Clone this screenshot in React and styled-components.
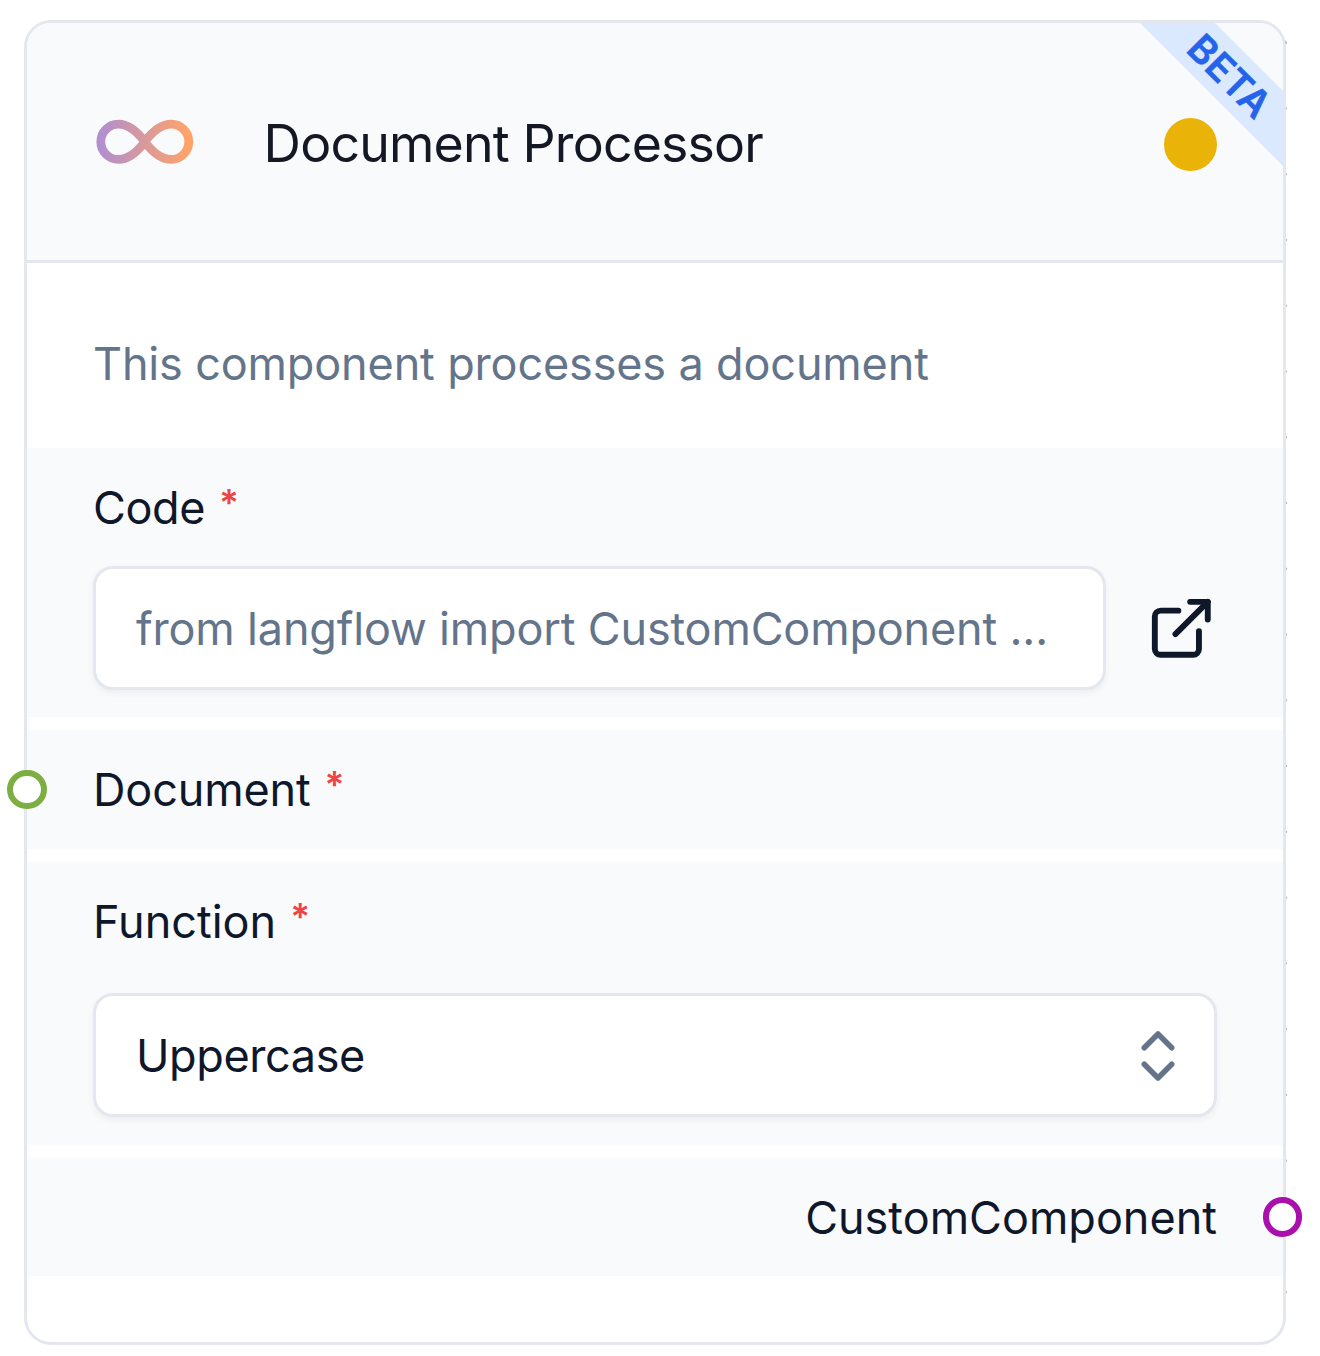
import React from "react";
import styled, { createGlobalStyle } from "styled-components";

const GlobalStyle = createGlobalStyle`
  *, *::before, *::after { box-sizing: border-box; }
  body { margin: 0; background: #ffffff; }
`;

const Canvas = styled.main`
  display: flex;
  align-items: flex-start;
  height: 1356px;
  padding: 20px 0 0 24px;
  overflow: hidden;
  font-family: Inter, "Liberation Sans", sans-serif;
  background-color: #ffffff;
  background-image: radial-gradient(circle at center, #81818a 1.1px, transparent 2.1px);
  background-size: 65.77px 65.77px;
  background-position: 1252.2px 9.8px;
`;

const Node = styled.article`
  position: relative;
  display: flex;
  flex-direction: column;
  width: 1262px;
  height: 1325px;
  border: 3px solid #e4e7ee;
  border-radius: 27px;
  background: #ffffff;
`;

const Header = styled.header`
  position: relative;
  display: flex;
  align-items: center;
  height: 240px;
  padding: 0 66px 0 65px;
  border-bottom: 3px solid #e4e7ee;
  border-radius: 24px 24px 0 0;
  background: #f9fafc;
  overflow: hidden;
`;

const NodeIcon = styled.svg`
  flex: none;
  width: 105.6px;
  height: 105.6px;
  margin-top: 1px;
`;

const Title = styled.h1`
  flex: 1;
  margin: 2px 0 0 66px;
  font-size: 51.8px;
  font-weight: 400;
  line-height: 66px;
  letter-spacing: -0.82px;
  color: #141824;
  white-space: nowrap;
`;

const StatusDot = styled.span`
  width: 53px;
  height: 53px;
  margin-top: 6px;
  border-radius: 50%;
  background: #eab308;
`;

const Ribbon = styled.span`
  position: absolute;
  top: 26px;
  right: -96.5px;
  display: flex;
  align-items: center;
  justify-content: center;
  width: 300px;
  height: 53px;
  padding-top: 2px;
  background: #dbe9fe;
  color: #2563eb;
  font-size: 38.4px;
  font-weight: 600;
  line-height: 51px;
  letter-spacing: 0.2px;
  -webkit-text-stroke: 0.5px #2563eb;
  transform: rotate(45deg);
`;

const Description = styled.p`
  height: 185px;
  margin: 0;
  padding: 68px 66px 0;
  font-size: 45px;
  line-height: 66px;
  letter-spacing: -0.15px;
  color: #64748b;
  white-space: nowrap;
`;

const Fields = styled.div`
  display: flex;
  flex-direction: column;
  gap: 13px;
`;

const Field = styled.section`
  position: relative;
  height: ${(p) => p.$height}px;
  padding: 27px 66px 0;
  background: #f9fafc;
  text-align: ${(p) => (p.$output ? "right" : "left")};
`;

const Label = styled.div`
  height: 66px;
  font-size: 45px;
  line-height: 66px;
  letter-spacing: ${(p) => p.$tracking || 0}px;
  color: #0f172a;
  white-space: nowrap;
`;

const Required = styled.span`
  margin-left: 14px;
  font-size: 37px;
  font-weight: 600;
  line-height: 1;
  vertical-align: 8px;
  color: #ef4444;
`;

const ControlRow = styled.div`
  display: flex;
  align-items: center;
  gap: 40px;
  margin-top: ${(p) => p.$gap}px;
`;

const Control = styled.div`
  display: flex;
  flex: 1;
  align-items: center;
  justify-content: space-between;
  height: 124px;
  padding: 2px 23px 0 40px;
  border: 3px solid #e4e7ee;
  border-radius: 20px;
  background: #ffffff;
  box-shadow: 0 3px 7px rgba(0, 0, 0, 0.05);
  color: ${(p) => (p.$muted ? "#64748b" : "#0f172a")};
  font-size: 45px;
  line-height: 66px;
  letter-spacing: ${(p) => p.$tracking || 0}px;
  white-space: nowrap;
`;

const LineIcon = styled.svg`
  flex: none;
  width: ${(p) => p.$size}px;
  height: ${(p) => p.$size}px;
  fill: none;
  stroke: ${(p) => p.$color};
  stroke-width: 2;
  stroke-linecap: round;
  stroke-linejoin: round;
`;

const Handle = styled.i`
  position: absolute;
  top: ${(p) => p.$top}px;
  ${(p) => p.$side}: ${(p) => p.$offset}px;
  width: 39.6px;
  height: 39.6px;
  border: 6.6px solid ${(p) => p.$color};
  border-radius: 50%;
  background: #ffffff;
`;

function InfinityMark() {
  return (
    <NodeIcon viewBox="0 0 24 24" fill="none" aria-hidden="true">
      <defs>
        <linearGradient id="mark" x1="1" y1="0" x2="23" y2="0" gradientUnits="userSpaceOnUse">
          <stop offset="0.05" stopColor="#b28fce" />
          <stop offset="0.95" stopColor="#ffa369" />
        </linearGradient>
      </defs>
      <path
        d="M12 12c-2-2.67-4-4-6-4a4 4 0 1 0 0 8c2 0 4-1.33 6-4Zm0 0c2 2.67 4 4 6 4a4 4 0 0 0 0-8c-2 0-4 1.33-6 4Z"
        stroke="url(#mark)"
        strokeWidth="2"
        strokeLinecap="round"
        strokeLinejoin="round"
      />
    </NodeIcon>
  );
}

export default function App() {
  return (
    <>
      <GlobalStyle />
      <Canvas>
        <Node>
          <Header>
            <InfinityMark />
            <Title>Document Processor</Title>
            <StatusDot />
            <Ribbon>BETA</Ribbon>
          </Header>
          <Description>This component processes a document</Description>
          <Fields>
            <Field $height={269}>
              <Label $tracking={-0.4}>Code<Required>*</Required></Label>
              <ControlRow $gap={25}>
                <Control $muted $tracking={-0.17}>from langflow import CustomComponent ...</Control>
                <LineIcon viewBox="0 0 24 24" $size={70.6} $color="#0f172a">
                  <path d="M18 13v6a2 2 0 0 1-2 2H5a2 2 0 0 1-2-2V8a2 2 0 0 1 2-2h6" />
                  <path d="M15 3h6v6" />
                  <path d="M10 14 21 3" />
                </LineIcon>
              </ControlRow>
            </Field>
            <Field $height={119}>
              <Handle $side="left" $offset={-20} $top={39.7} $color="#7cae42" />
              <Label $tracking={-0.15}>Document<Required>*</Required></Label>
            </Field>
            <Field $height={283}>
              <Label>Function<Required>*</Required></Label>
              <ControlRow $gap={38}>
                <Control $tracking={-0.4}>
                  Uppercase
                  <LineIcon viewBox="0 0 24 24" $size={66} $color="#64748b">
                    <path d="m7 15 5 5 5-5" />
                    <path d="m7 9 5-5 5 5" />
                  </LineIcon>
                </Control>
              </ControlRow>
            </Field>
            <Field $height={118} $output>
              <Label>CustomComponent</Label>
              <Handle $side="right" $offset={-19.2} $top={39} $color="#aa0fae" />
            </Field>
          </Fields>
        </Node>
      </Canvas>
    </>
  );
}
